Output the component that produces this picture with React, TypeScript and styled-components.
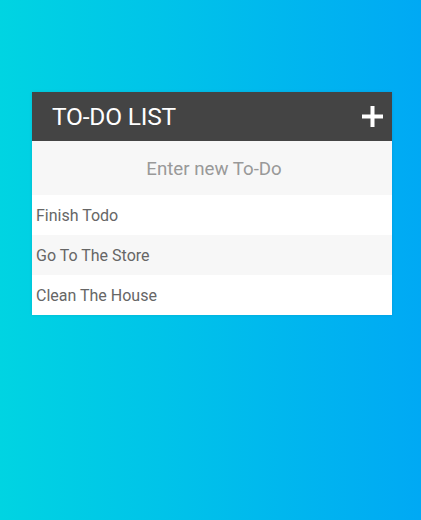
import React, { useState } from "react";
import styled, { createGlobalStyle } from "styled-components";

const GlobalStyle = createGlobalStyle`
  html, body {
    margin: 0;
    height: 100%;
  }
  body {
    font-family: Roboto, "Liberation Sans", sans-serif;
    background: linear-gradient(to right, #00d4e2, #00a9f4);
  }
  #root {
    min-height: 100%;
  }
`;

const Page = styled.div`
  min-height: 520px;
  padding: 92px 29px 0 32px;
  box-sizing: border-box;
`;

const Card = styled.div`
  width: 360px;
  background: #fff;
  box-shadow: 0 0 3px rgba(0, 0, 0, 0.1);
`;

const Header = styled.div`
  height: 49px;
  background: #444444;
  color: #fff;
  display: flex;
  align-items: center;
  justify-content: space-between;
  padding: 0 9px 0 20px;
`;

const Title = styled.h1`
  margin: 0;
  font-size: 24.5px;
  font-weight: 400;
  letter-spacing: -0.2px;
`;

const AddButton = styled.button`
  border: none;
  background: none;
  padding: 0;
  display: flex;
  cursor: pointer;
`;

const NewTodo = styled.input`
  display: block;
  width: 100%;
  height: 54px;
  box-sizing: border-box;
  border: none;
  outline: none;
  background: #f7f7f7;
  font-family: inherit;
  font-size: 18.7px;
  color: #666;
  text-align: center;
  padding: 2px 0 0 4px;
  &::placeholder {
    color: #999;
  }
`;

const List = styled.ul`
  list-style: none;
  margin: 0;
  padding: 0;
`;

const Item = styled.li<{ $shade: boolean }>`
  height: 40px;
  line-height: 42px;
  padding-left: 4px;
  font-size: 16px;
  color: #666;
  background: ${(p) => (p.$shade ? "#f7f7f7" : "#fff")};
`;

export default function App() {
  const [text, setText] = useState("");
  const todos = ["Finish Todo", "Go To The Store", "Clean The House"];

  return (
    <Page>
      <GlobalStyle />
      <Card>
        <Header>
          <Title>TO-DO LIST</Title>
          <AddButton aria-label="add">
            <svg width="21" height="21" viewBox="0 0 21 21">
              <rect x="8.5" y="0" width="4" height="21" fill="#fff" />
              <rect x="0" y="8.5" width="21" height="4" fill="#fff" />
            </svg>
          </AddButton>
        </Header>
        <NewTodo
          placeholder="Enter new To-Do"
          value={text}
          onChange={(e) => setText(e.target.value)}
        />
        <List>
          {todos.map((t, i) => (
            <Item key={t} $shade={i % 2 === 1}>
              {t}
            </Item>
          ))}
        </List>
      </Card>
    </Page>
  );
}
